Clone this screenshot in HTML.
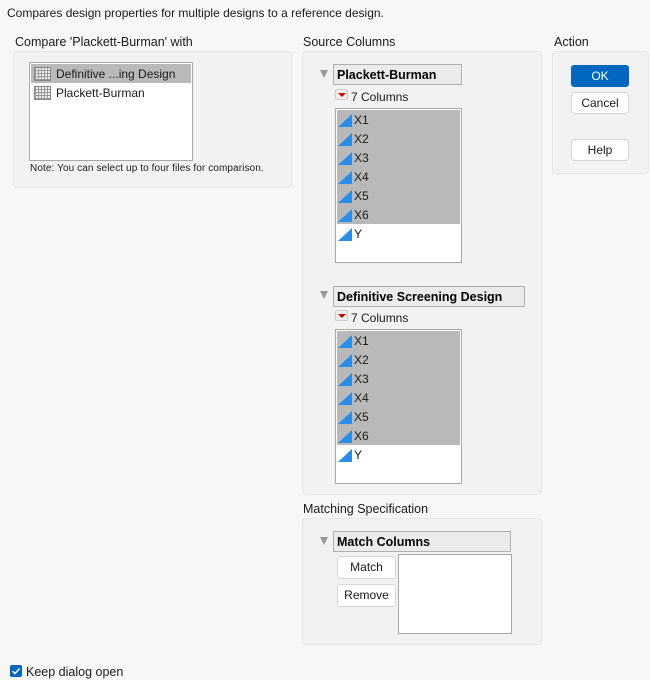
<!DOCTYPE html>
<html><head><style>
*{box-sizing:border-box;margin:0;padding:0}
body{width:650px;height:680px;background:#f7f7f7;font-family:"Liberation Sans",sans-serif;font-size:12px;color:#1a1a1a;position:relative;overflow:hidden}
.a{position:absolute;white-space:nowrap}
.panel{position:absolute;background:#f2f2f2;border:1px solid #e6e6e6;border-radius:4px}
.list{position:absolute;background:#fff;border:1px solid #a8a8a8}
.row{height:19px;line-height:20px;position:relative;padding-left:17px}
.sel{background:#b9b9b9}
.tri{position:absolute;left:1px;top:4px;width:0;height:0;border-left:14px solid transparent;border-bottom:13px solid #2a8ee8}
.btn{position:absolute;background:#fff;border:1px solid #d6d6d6;border-radius:3px;text-align:center;line-height:21px;font-size:12px}
.hdr{position:absolute;background:#ebebeb;border:1px solid #b0b0b0;font-weight:bold;padding-left:3px;line-height:20px;font-size:12.5px;color:#000}
.disc{position:absolute;width:0;height:0;border-left:4.5px solid transparent;border-right:4.5px solid transparent;border-top:8px solid #999}
.red{position:absolute;width:13px;height:11px;background:#eee;border:1px solid #ccc;border-radius:2px}
.red:after{content:"";position:absolute;left:2px;top:3px;border-left:4px solid transparent;border-right:4px solid transparent;border-top:4px solid #c00}
.grid{display:inline-block;position:absolute;left:3px;top:3px;width:17px;height:14px;border:1px solid #888;background:repeating-linear-gradient(90deg,#999 0 1px,transparent 1px 3px),repeating-linear-gradient(0deg,#999 0 1px,#eee 1px 3px)}
</style></head><body>
<div class="a" style="left:7px;top:6px">Compares design properties for multiple designs to a reference design.</div>

<div class="a" style="left:15px;top:35px;font-size:12.5px">Compare 'Plackett-Burman' with</div>
<div class="panel" style="left:13px;top:51px;width:279px;height:137px"></div>
<div class="list" style="left:29px;top:62px;width:164px;height:99px;padding:1px">
<div class="row sel" style="padding-left:25px"><span class="grid"></span>Definitive ...ing Design</div>
<div class="row" style="padding-left:25px"><span class="grid"></span>Plackett-Burman</div>
</div>
<div class="a" style="left:30px;top:163px;font-size:10px;letter-spacing:0.1px">Note: You can select up to four files for comparison.</div>

<div class="a" style="left:303px;top:35px;font-size:12.5px">Source Columns</div>
<div class="panel" style="left:302px;top:51px;width:240px;height:444px"></div>
<div class="disc" style="left:320px;top:70px"></div>
<div class="hdr" style="left:333px;top:64px;width:129px;height:21px">Plackett-Burman</div>
<div class="red" style="left:335px;top:89px"></div>
<div class="a" style="left:351px;top:90px">7 Columns</div>
<div class="list" style="left:335px;top:108px;width:127px;height:155px;padding:1px">
<div class="sel"><div class="row"><span class="tri"></span>X1</div><div class="row"><span class="tri"></span>X2</div><div class="row"><span class="tri"></span>X3</div><div class="row"><span class="tri"></span>X4</div><div class="row"><span class="tri"></span>X5</div><div class="row"><span class="tri"></span>X6</div></div>
<div class="row"><span class="tri"></span>Y</div>
</div>

<div class="disc" style="left:320px;top:291px"></div>
<div class="hdr" style="left:333px;top:286px;width:192px;height:21px">Definitive Screening Design</div>
<div class="red" style="left:335px;top:310px"></div>
<div class="a" style="left:351px;top:311px">7 Columns</div>
<div class="list" style="left:335px;top:329px;width:127px;height:155px;padding:1px">
<div class="sel"><div class="row"><span class="tri"></span>X1</div><div class="row"><span class="tri"></span>X2</div><div class="row"><span class="tri"></span>X3</div><div class="row"><span class="tri"></span>X4</div><div class="row"><span class="tri"></span>X5</div><div class="row"><span class="tri"></span>X6</div></div>
<div class="row"><span class="tri"></span>Y</div>
</div>

<div class="a" style="left:554px;top:35px;font-size:12.5px">Action</div>
<div class="panel" style="left:552px;top:51px;width:97px;height:123px"></div>
<div class="btn" style="left:571px;top:65px;width:58px;height:22px;background:#0067c0;border-color:#0067c0;color:#fff">OK</div>
<div class="btn" style="left:571px;top:92px;width:58px;height:22px">Cancel</div>
<div class="btn" style="left:571px;top:139px;width:58px;height:22px">Help</div>

<div class="a" style="left:303px;top:502px;font-size:12.5px">Matching Specification</div>
<div class="panel" style="left:302px;top:518px;width:240px;height:127px"></div>
<div class="disc" style="left:320px;top:537px"></div>
<div class="hdr" style="left:333px;top:531px;width:178px;height:21px">Match Columns</div>
<div class="btn" style="left:337px;top:556px;width:59px;height:23px">Match</div>
<div class="btn" style="left:337px;top:584px;width:59px;height:23px">Remove</div>
<div class="list" style="left:398px;top:554px;width:114px;height:80px"></div>

<div class="a" style="left:10px;top:665px;width:12px;height:12px;background:#0067c0;border-radius:2px"><svg width="12" height="12" style="position:absolute;left:0;top:0"><path d="M2.5 6.2 L5 8.6 L9.5 3.6" stroke="#fff" stroke-width="1.5" fill="none"/></svg></div>
<div class="a" style="left:26px;top:665px;font-size:12.5px">Keep dialog open</div>
</body></html>
